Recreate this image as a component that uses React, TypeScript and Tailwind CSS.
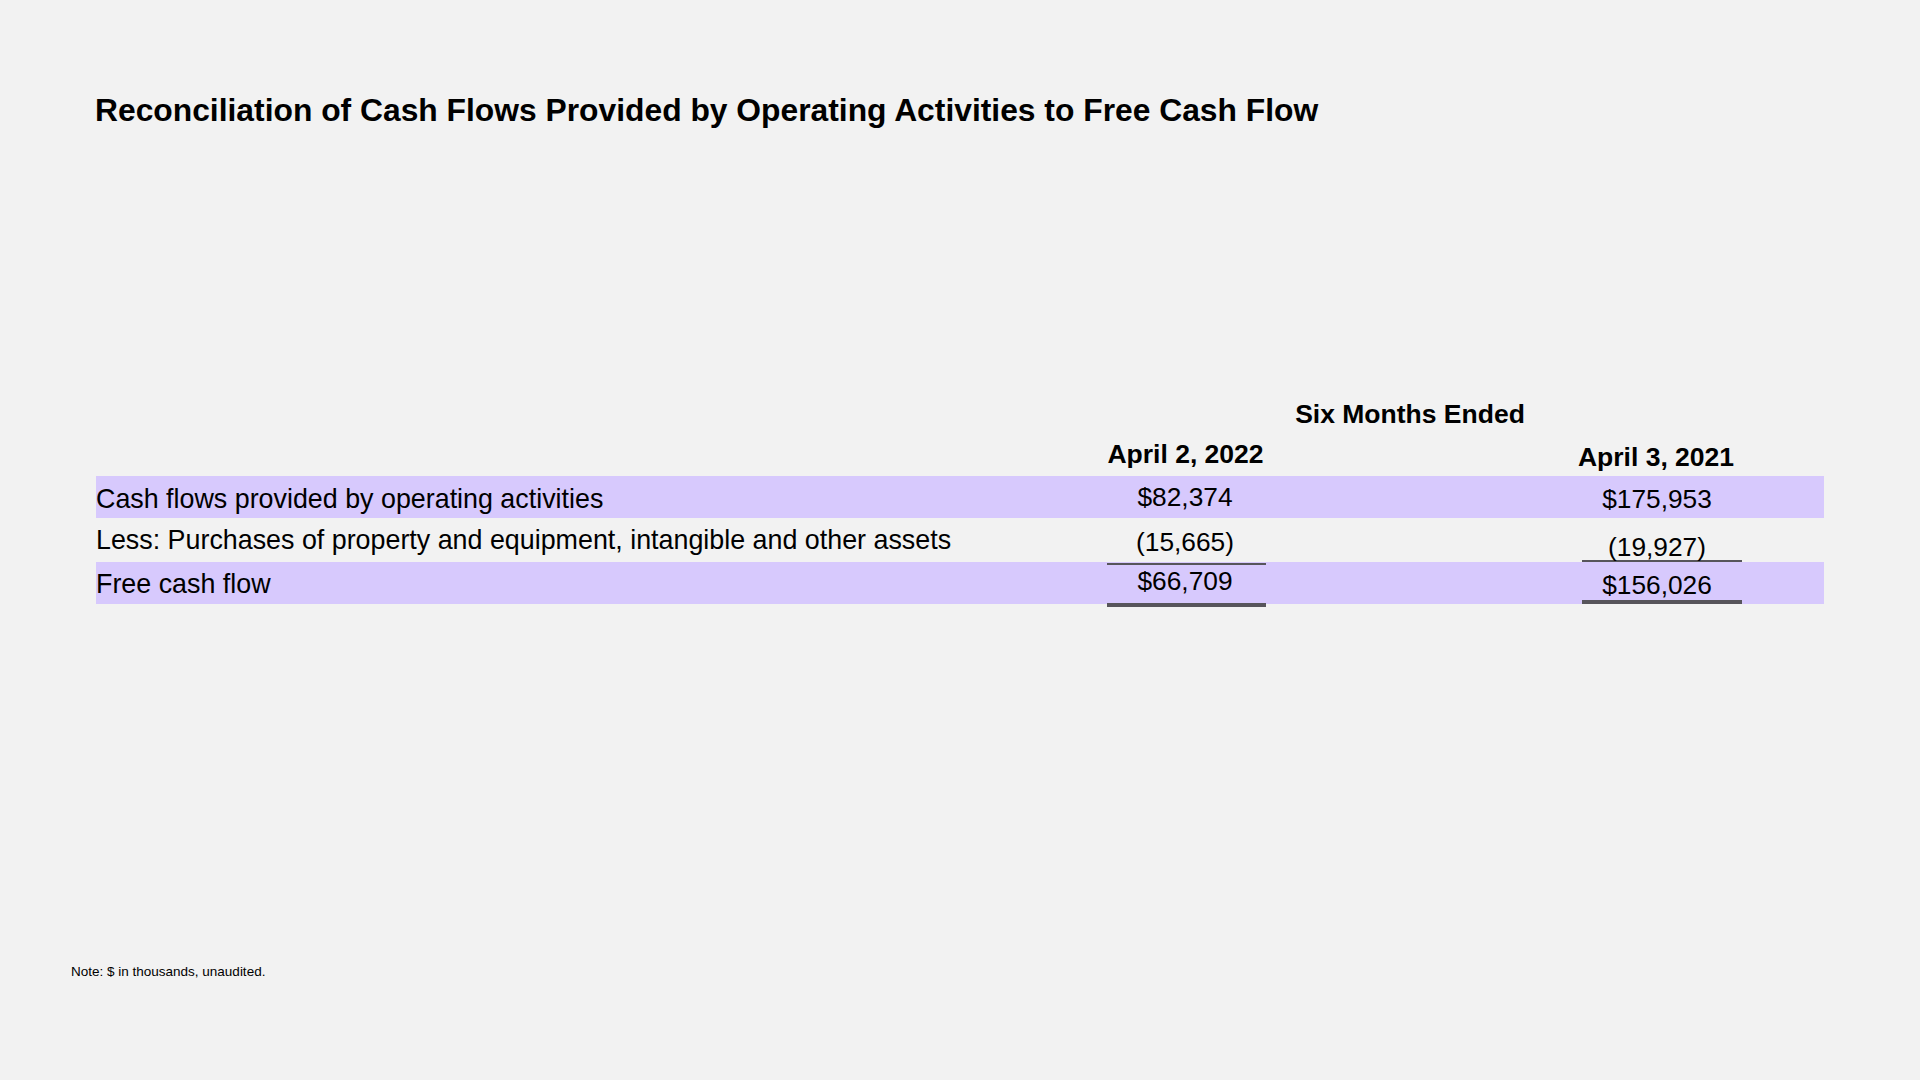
import React from 'react';

// Reconciliation slide: operating cash flow -> free cash flow
const LINE = 'border-[#57555b]';

export default function App() {
  return (
    <div className="min-h-screen w-full bg-[#f2f2f2] text-black font-['Liberation_Sans',Arial,sans-serif] flex flex-col">
      <h1 className="pl-[95px] pt-[91px] text-[31.8px] leading-[38px] font-bold whitespace-nowrap">
        Reconciliation of Cash Flows Provided by Operating Activities to Free Cash Flow
      </h1>

      <section className="mt-[270px] pl-[96px] text-[26.3px] leading-[30px]">
        {/* header */}
        <div className="flex h-[40px] text-[26.5px]">
          <div className="w-[1011px]" />
          <div className="w-[606px] text-center font-bold">Six Months Ended</div>
        </div>
        <div className="flex h-[37px] items-start font-bold text-[26.5px]">
          <div className="w-[1011px]" />
          <div className="w-[159px] pr-[2px] text-center whitespace-nowrap">April 2, 2022</div>
          <div className="w-[306px]" />
          <div className="w-[170px] pt-[3px] pr-[2px] text-center whitespace-nowrap">April 3, 2021</div>
        </div>

        {/* row 1 */}
        <div className="flex h-[42px] w-[1728px] items-start bg-[#d7c9fd]">
          <div className="w-[1011px] pt-[8px] text-[26.85px] whitespace-nowrap">Cash flows provided by operating activities</div>
          <div className="w-[159px] pt-[6px] pr-[3px] text-center">$82,374</div>
          <div className="w-[316px]" />
          <div className="w-[160px] pt-[8px] pr-[10px] text-center">$175,953</div>
        </div>

        {/* row 2 */}
        <div className="flex h-[44px] w-[1728px] items-start">
          <div className="w-[1011px] pt-[7px] text-[26.85px] whitespace-nowrap">
            Less: Purchases of property and equipment, intangible and other assets
          </div>
          <div className="w-[159px] pt-[9px] pr-[3px] text-center">(15,665)</div>
          <div className="w-[316px]" />
          <div className={`w-[160px] h-[44px] border-b-2 ${LINE} pt-[14px] pr-[10px] text-center`}>(19,927)</div>
        </div>

        {/* row 3 */}
        <div className="flex h-[42px] w-[1728px] items-start bg-[#d7c9fd]">
          <div className="w-[1011px] pt-[7px] text-[26.85px] whitespace-nowrap">Free cash flow</div>
          <div className={`w-[159px] h-[44px] mt-[1px] border-t-2 border-b-4 ${LINE} pt-[1px] pr-[3px] text-center`}>
            $66,709
          </div>
          <div className="w-[316px]" />
          <div className={`w-[160px] h-[42px] border-b-4 ${LINE} pt-[8px] pr-[10px] text-center`}>$156,026</div>
        </div>
      </section>

      <p className="mt-[360px] pl-[71px] text-[13.5px] leading-[16px]">Note: $ in thousands, unaudited.</p>
    </div>
  );
}
